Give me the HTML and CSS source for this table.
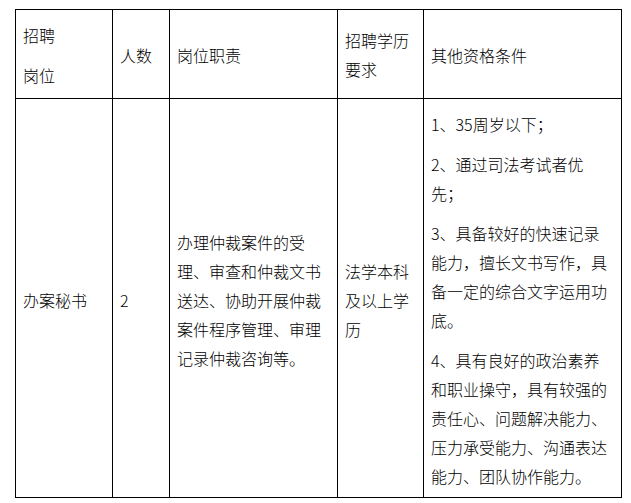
FILE: index.html
```html
<!DOCTYPE html>
<html lang="zh-CN">
<head>
<meta charset="utf-8">
<title>招聘岗位</title>
<link rel="stylesheet" href="styles.css">
</head>
<body>
<div class="page">
  <table class="jobs">
    <colgroup>
      <col class="c1"><col class="c2"><col class="c3"><col class="c4"><col class="c5">
    </colgroup>
    <tr class="head">
      <td><p>招聘</p><p>岗位</p></td>
      <td><p>人数</p></td>
      <td><p>岗位职责</p></td>
      <td><p>招聘学历要求</p></td>
      <td><p>其他资格条件</p></td>
    </tr>
    <tr class="body">
      <td><p>办案秘书</p></td>
      <td><p>2</p></td>
      <td><p>办理仲裁案件的受理、审查和仲裁文书送达、协助开展仲裁案件程序管理、审理记录仲裁咨询等。</p></td>
      <td><p>法学本科及以上学历</p></td>
      <td>
        <p>1、35周岁以下；</p>
        <p>2、通过司法考试者优先；</p>
        <p>3、具备较好的快速记录能力，擅长文书写作，具备一定的综合文字运用功底。</p>
        <p>4、具有良好的政治素养和职业操守，具有较强的责任心、问题解决能力、压力承受能力、沟通表达能力、团队协作能力。</p>
      </td>
    </tr>
  </table>
</div>
</body>
</html>
```
FILE: styles.css
```css
html, body {
  margin: 0;
  padding: 0;
  background: #fff;
}
.page {
  padding: 9px 0 0 15px;
}
.jobs {
  table-layout: fixed;
  border-collapse: separate;
  border-spacing: 0;
  width: 607px;
  border-top: 1px solid #000;
  border-left: 1px solid #000;
  font-family: "Noto Sans CJK SC", "Liberation Sans", sans-serif;
  font-size: 16px;
  font-weight: 300;
  line-height: 29px;
  color: #000;
}
.c1 { width: 97px; }
.c2 { width: 57px; }
.c3 { width: 168px; }
.c4 { width: 86px; }
.c5 { width: 198px; }
.jobs td {
  box-sizing: border-box;
  border-right: 1px solid #000;
  border-bottom: 1px solid #000;
  padding: 10px 8px 6px 7px;
  vertical-align: middle;
  word-break: normal;
  line-break: strict;
}
.head td {
  height: 89px;
  padding-top: 8px;
}
.body td {
  height: 399px;
}
.jobs p {
  margin: 0;
}
.jobs p + p {
  margin-top: 11px;
}
```
